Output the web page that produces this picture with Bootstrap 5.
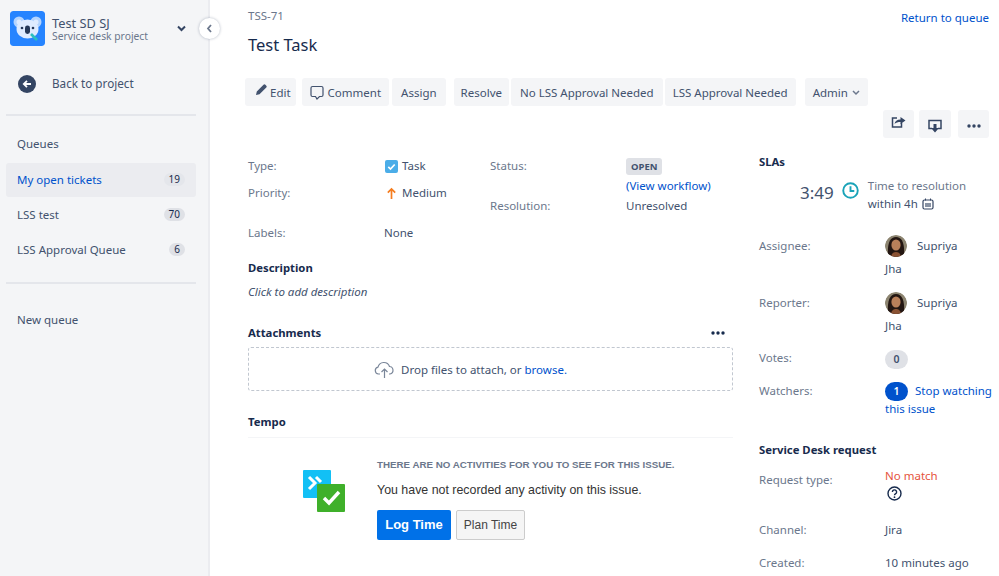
<!DOCTYPE html>
<html lang="en"><head><meta charset="utf-8"><title>TSS-71</title>
<link href="https://cdn.jsdelivr.net/npm/bootstrap@5.3.0/dist/css/bootstrap.min.css" rel="stylesheet">
<style>
html,body{height:576px;overflow:hidden}
body{font-family:"Noto Sans","Open Sans",sans-serif;font-size:11.5px;line-height:16px;color:#172b4d;background:#fff}
.shell{height:576px;overflow:hidden}
.side{width:210px;flex:none;background:#f4f5f7;border-right:2px solid #ebecf0;position:relative;color:#42526e;height:576px}
.proj{padding:11px 0 0 10px;height:72px}
.plogo{width:35px;height:35px;flex:none;border-radius:3px}
.pname{font-size:12.800px;line-height:14px;color:#42526e;margin-left:7px;padding-top:5px}
.psub{font-size:10.300px;line-height:12px;color:#6b778c}
.pchev{margin-left:auto;margin-right:22px}
.collapse-btn{position:absolute;left:199px;top:18px;width:21px;height:21px;border-radius:50%;background:#fff;box-shadow:0 0 3px rgba(9,30,66,.3);display:flex;align-items:center;justify-content:center}
.backrow{padding-left:18px;height:24px;gap:16px;font-size:11.700px}
.backrow span{margin-top:-2px}
.sep{height:2px;background:#e4e6eb;margin:0 12px 0 6px}
.qhead{padding-left:17px;height:16px;margin:20px 0 11px;color:#42526e}
.qitem{margin:0 12px 1px 6px;height:34px;padding:0 11px;border-radius:3px;display:flex;align-items:center;justify-content:space-between;color:#42526e;text-decoration:none}
.qitem.on{background:#ebecf0;color:#0052cc}
.qn{background:#dfe1e6;color:#172b4d;border-radius:8px;font-size:10px;line-height:13px;padding:0 5px;margin-top:-2px}
.on .qn{background:#e4e6eb}
.newq{padding-left:17px;margin-top:28px}
.mainp{flex:1;min-width:0;padding-left:38px;position:relative}
.crumb{font-size:11.500px;color:#6b778c;padding-top:8px;line-height:16px}
.back{position:absolute;right:10px;top:10px;color:#0052cc;text-decoration:none}
h1.ttl{font-size:16.500px;line-height:22px;font-weight:400;margin:10px 0 0;color:#172b4d}
.tb{margin:22px 0 0 -3px;gap:2px;height:28px}
.tbtn{background:#f4f5f7;border:0;border-radius:3px;color:#42526e;font-size:11.500px;line-height:16px;height:28px;padding:1px 9px 0;display:flex;align-items:center;gap:4px;white-space:nowrap}
.tb .bedit{padding-left:10px;padding-right:5px;gap:2px}
.tb .bcomm{padding-left:8px;padding-right:8px;margin-left:4px}
.tb .bres{padding-left:7px;padding-right:7px;margin-left:6px}
.tb .bno{padding-left:9px;padding-right:9px}
.tb .blss{padding-left:8px;padding-right:8px}
.tb .badm{padding-left:8px;padding-right:8px;margin-left:7px}
.tb .g1{margin-left:1px}
.tb2{justify-content:flex-end;margin:4px 10px 0 0;height:28px}
.tb2 .tbtn{width:31px;padding:0;justify-content:center}
.tb2 .m5{margin-left:5px;width:32px}
.tb2 .m7{margin-left:7px}
.cols{gap:26px;margin-top:20px}
.lc{width:485px;flex:none}
.rc{width:240px;flex:none;margin-top:-4px}
.lbl{color:#6b778c}
.val{color:#42526e}
.dtl{height:91px;position:relative}
.dcol{width:242px;flex:none}
.dr{display:flex;height:27px}
.dr .lbl{width:136px;flex:none}
.stw{width:136px;flex:none}
.lozg{background:#dfe1e6;color:#42526e;font-weight:700;font-size:9.500px;line-height:17px;border-radius:3px;padding:0 5px;display:block;width:fit-content}
.secth{font-weight:700;font-size:11.300px;color:#172b4d;line-height:16px}
.lnk{color:#0052cc;text-decoration:none}
.desc{font-style:italic;color:#42526e;margin-top:8px}
.drop{border:1px dashed #c1c7d0;border-radius:3px;height:44px;margin-top:6px;padding:1px 40px 0 0;display:flex;align-items:center;justify-content:center;gap:6px;color:#42526e}
.tempo{height:132px;margin-top:7px;border-top:1px solid #f4f5f7;display:flex;padding:20px 0 0 55px;font-family:"Liberation Sans",sans-serif}
.tico{width:42px;height:42px;flex:none;margin-right:32px;margin-top:12px}
.tcap{font-size:9.750px;font-weight:700;color:#6b778c;line-height:14px}
.tmsg{font-size:12.400px;color:#333;margin-top:10px;line-height:16px}
.tact{gap:5px;margin-top:12px}
.logb{background:#0071e8;border:0;color:#fff;font-weight:700;font-size:13px;height:30px;width:74px;border-radius:2px;padding:0}
.planb{background:#f5f5f5;border:1px solid #ccc;color:#444;font-size:12px;height:30px;width:69px;border-radius:2px;padding:0}
.rrow{display:flex}
.rrow .lbl{width:126px;flex:none}
.ava{width:22px;height:22px;border-radius:50%;flex:none;margin-right:10px}
.ppl{height:46px}
.pline{height:16px}
.pjha{margin-top:7px}
.sla{height:37px;gap:8px;margin-top:7px;padding-left:41px}
.slat{font-size:17px;line-height:24px;color:#42526e;margin-top:4px}
.slai{margin-top:5px;margin-right:1px}
.slax{line-height:18px}
.pill{display:inline-block;background:#dfe1e6;border-radius:10px;min-width:23px;text-align:center;line-height:19px;font-size:10.500px;font-weight:600;color:#42526e}
.pill.blue{background:#0052cc;color:#fff;margin-bottom:-1px}
.red{color:#e5533d}
.nw{white-space:nowrap;line-height:18px}
.watchl{padding-top:1px}
</style></head>
<body>
<div class="shell d-flex">
<aside class="side">
 <div class="proj d-flex align-items-start">
  <svg class="plogo" viewBox="0 0 35 35"><rect width="35" height="35" rx="3" fill="#2684ff"/><circle cx="9" cy="11" r="5.500" fill="#b3d4ff"/><circle cx="26" cy="11" r="5.500" fill="#b3d4ff"/><circle cx="9" cy="11" r="2.500" fill="#deebff"/><circle cx="26" cy="11" r="2.500" fill="#deebff"/><ellipse cx="17.500" cy="18" rx="11" ry="9.500" fill="#deebff"/><circle cx="12" cy="17" r="1.300" fill="#253858"/><circle cx="23" cy="17" r="1.300" fill="#253858"/><rect x="15" y="14.500" width="5" height="8.500" rx="2.400" fill="#253858"/><path d="M21 23l6 6" stroke="#2abfbf" stroke-width="2.600"/></svg>
  <div class="pname"><div>Test SD SJ</div><div class="psub">Service desk project</div></div>
  <svg class="pchev" style="margin-top:14px" width="9" height="7" viewBox="0 0 9 7"><path d="M1 1.500l3.500 3.500 3.500-3.500" fill="none" stroke="#344563" stroke-width="2"/></svg>
 </div>
 <div class="collapse-btn"><svg width="7" height="9" viewBox="0 0 7 9"><path d="M5 1L2 4.500 5 8" fill="none" stroke="#6b778c" stroke-width="1.800"/></svg></div>
 <div class="backrow d-flex align-items-center">
  <svg width="18" height="18" viewBox="0 0 18 18"><circle cx="9" cy="9" r="9" fill="#344563"/><path d="M13 9H6M9 5.800L5.800 9 9 12.200" fill="none" stroke="#fff" stroke-width="1.800"/></svg>
  <span>Back to project</span>
 </div>
 <div class="sep" style="margin-top:18px"></div>
 <div class="qhead">Queues</div>
 <a class="qitem on" href="#"><span>My open tickets</span><span class="qn">19</span></a>
 <a class="qitem" href="#"><span>LSS test</span><span class="qn">70</span></a>
 <a class="qitem" href="#"><span>LSS Approval Queue</span><span class="qn">6</span></a>
 <div class="sep" style="margin-top:15px"></div>
 <div class="newq">New queue</div>
</aside>
<main class="mainp">
 <a class="back" href="#">Return to queue</a>
 <div class="crumb">TSS-71</div>
 <h1 class="ttl">Test Task</h1>
 <div class="tb d-flex">
  <button class="tbtn bedit"><svg width="13" height="13" viewBox="0 0 13 13" style="margin-top:-6px"><path d="M1 12l.8-3.500L8.500 1.800a1.300 1.300 0 0 1 1.900 0l.9.900a1.300 1.300 0 0 1 0 1.900L4.500 11.200z" fill="#42526e"/></svg>Edit</button>
  <button class="tbtn bcomm"><svg width="14" height="15" viewBox="0 0 14 15"><path d="M2.500 1.500h9a1.500 1.500 0 0 1 1.500 1.500v7a1.500 1.500 0 0 1-1.500 1.500H9.500L7 14l-1.500-2.500h-3A1.500 1.500 0 0 1 1 10V3a1.500 1.500 0 0 1 1.500-1.500z" fill="none" stroke="#42526e" stroke-width="1.200"/></svg>Comment</button>
  <button class="tbtn g1">Assign</button>
  <button class="tbtn bres">Resolve</button>
  <button class="tbtn bno">No LSS Approval Needed</button>
  <button class="tbtn blss">LSS Approval Needed</button>
  <button class="tbtn badm">Admin <svg width="8" height="6" viewBox="0 0 8 6"><path d="M1 1l3 3 3-3" fill="none" stroke="#6b778c" stroke-width="1.500"/></svg></button>
 </div>
 <div class="tb2 d-flex">
  <button class="tbtn" aria-label="Share"><svg width="15" height="13" viewBox="0 0 15 13" style="margin-top:-5px"><path d="M6 3H1.500v9h9V8" fill="none" stroke="#344563" stroke-width="1.500"/><path d="M3.500 9c.5-3 2.500-4.500 6-4.500V2l5 3.500-5 3.500V7C7 7 5 7.500 3.500 9z" fill="#344563"/></svg></button>
  <button class="tbtn m5" aria-label="Export"><svg width="14" height="14" viewBox="0 0 14 14" style="margin-top:3px"><path d="M4 9.500H1V1.500h12v8h-3" fill="none" stroke="#344563" stroke-width="1.500"/><path d="M5.500 5h3v4h2.500L7 13.500 3 9h2.500z" fill="#344563"/></svg></button>
  <button class="tbtn m7" aria-label="More"><svg width="14" height="4" viewBox="0 0 14 4" style="margin-top:3px"><circle cx="2" cy="2" r="1.700" fill="#344563"/><circle cx="7" cy="2" r="1.700" fill="#344563"/><circle cx="12" cy="2" r="1.700" fill="#344563"/></svg></button>
 </div>
 <div class="cols d-flex">
  <div class="lc">
   <div class="dtl">
    <div class="d-flex">
     <div class="dcol">
      <div class="dr"><span class="lbl">Type:</span><span class="val d-flex gap-1"><svg width="13" height="13" viewBox="0 0 13 13" style="margin:2px 0 0 1px"><rect width="13" height="13" rx="2" fill="#4bade8"/><path d="M3.300 6.800l2.200 2.200 4.200-4.500" fill="none" stroke="#fff" stroke-width="1.700"/></svg>Task</span></div>
      <div class="dr"><span class="lbl">Priority:</span><span class="val d-flex gap-1"><svg width="13" height="13" viewBox="0 0 13 13" style="margin:2px 0 0 1px"><path d="M6.500 12V2M2.800 5.700L6.500 2l3.700 3.700" fill="none" stroke="#f57d20" stroke-width="1.700"/></svg>Medium</span></div>
     </div>
     <div class="flex-grow-1">
      <div class="d-flex"><span class="lbl stw">Status:</span><div><span class="lozg">OPEN</span><div style="margin-top:3px"><a class="lnk" href="#">(View workflow)</a></div></div></div>
      <div class="d-flex" style="margin-top:4px"><span class="lbl stw">Resolution:</span><span class="val">Unresolved</span></div>
     </div>
    </div>
    <div class="dr position-absolute" style="top:67px;left:0"><span class="lbl">Labels:</span><span class="val">None</span></div>
   </div>
   <div class="secth" style="margin-top:11px">Description</div>
   <div class="desc">Click to add description</div>
   <div class="d-flex justify-content-between align-items-center" style="margin-top:25px"><span class="secth">Attachments</span><svg width="14" height="4" viewBox="0 0 14 4" style="margin-right:8px"><circle cx="2" cy="2" r="1.700" fill="#172b4d"/><circle cx="7" cy="2" r="1.700" fill="#172b4d"/><circle cx="12" cy="2" r="1.700" fill="#172b4d"/></svg></div>
   <div class="drop"><svg width="21" height="19" viewBox="0 0 21 19"><path d="M6 14H4.500A3.500 3.500 0 0 1 4 7.100 6 6 0 0 1 15.500 6.500 3.800 3.800 0 0 1 16 14h-1" fill="none" stroke="#7a8699" stroke-width="1.200"/><path d="M10.500 18V9.500M7.500 12l3-3 3 3" fill="none" stroke="#7a8699" stroke-width="1.200"/></svg><span>Drop files to attach, or <a class="lnk" href="#">browse.</a></span></div>
   <div class="secth" style="margin-top:23px">Tempo</div>
   <div class="tempo">
    <svg class="tico" viewBox="0 0 42 42"><rect x="0" y="0" width="28" height="28" rx="1" fill="#12c0f5"/><path d="M6 7l6 6-6 6M13 7l5 5" fill="none" stroke="#fff" stroke-width="3"/><rect x="14" y="14" width="28" height="28" rx="1" fill="#3fb02a"/><path d="M21 28l5 5 10-11" fill="none" stroke="#fff" stroke-width="3.400"/></svg>
    <div>
     <div class="tcap">THERE ARE NO ACTIVITIES FOR YOU TO SEE FOR THIS ISSUE.</div>
     <div class="tmsg">You have not recorded any activity on this issue.</div>
     <div class="d-flex tact"><button class="logb">Log Time</button><button class="planb">Plan Time</button></div>
    </div>
   </div>
  </div>
  <div class="rc">
   <div class="secth">SLAs</div>
   <div class="sla d-flex">
    <span class="slat">3:49</span>
    <svg class="slai" width="17" height="17" viewBox="0 0 18 18"><circle cx="9" cy="9" r="7.700" fill="none" stroke="#1aa3b8" stroke-width="2"/><path d="M9 4.500V9.500H13" fill="none" stroke="#1aa3b8" stroke-width="2"/></svg>
    <div class="slax"><div class="lbl">Time to resolution</div><div class="val d-flex align-items-center gap-1">within 4h <svg width="12" height="12" viewBox="0 0 12 12"><rect x="1" y="2" width="10" height="9" rx="1.500" fill="none" stroke="#344563" stroke-width="1.200"/><path d="M3.500 .5v2M8.500 .5v2" stroke="#344563"/><rect x="3" y="5" width="6" height="4" fill="#8993a4"/></svg></div></div>
   </div>
   <div class="rrow" style="margin-top:24px"><span class="lbl">Assignee:</span><div class="val ppl"><div class="d-flex align-items-center pline"><svg class="ava" viewBox="0 0 22 22"><circle cx="11" cy="11" r="11" fill="#8c8470"/><path d="M3 22C2 8 5 2 11 2s9 6 8 20z" fill="#231612"/><ellipse cx="11" cy="10" rx="4.600" ry="5.600" fill="#b9805a"/><path d="M6 22c.5-4 3-5 5-5s4.500 1 5 5z" fill="#8a5233"/></svg><span>Supriya</span></div><div class="pjha">Jha</div></div></div>
   <div class="rrow" style="margin-top:11px"><span class="lbl">Reporter:</span><div class="val ppl"><div class="d-flex align-items-center pline"><svg class="ava" viewBox="0 0 22 22"><circle cx="11" cy="11" r="11" fill="#8c8470"/><path d="M3 22C2 8 5 2 11 2s9 6 8 20z" fill="#231612"/><ellipse cx="11" cy="10" rx="4.600" ry="5.600" fill="#b9805a"/><path d="M6 22c.5-4 3-5 5-5s4.500 1 5 5z" fill="#8a5233"/></svg><span>Supriya</span></div><div class="pjha">Jha</div></div></div>
   <div class="rrow" style="margin-top:9px"><span class="lbl">Votes:</span><span class="pill">0</span></div>
   <div class="rrow" style="margin-top:13px"><span class="lbl watchl">Watchers:</span><div class="nw"><span class="pill blue me-1">1</span> <a class="lnk" href="#">Stop watching<br>this issue</a></div></div>
   <div class="secth" style="margin-top:24px">Service Desk request</div>
   <div class="rrow" style="margin-top:9px"><span class="lbl" style="padding-top:5px">Request type:</span><div><div class="red" style="line-height:18px">No match</div><svg width="15" height="15" viewBox="0 0 15 15" style="margin-left:2px"><circle cx="7.500" cy="7.500" r="6.500" fill="none" stroke="#172b4d" stroke-width="1.400"/><path d="M5.400 6a2.100 2.100 0 1 1 3.300 1.700c-.8.500-1.200.9-1.200 1.500" fill="none" stroke="#172b4d" stroke-width="1.400"/><circle cx="7.500" cy="11.200" r=".9" fill="#172b4d"/></svg></div></div>
   <div class="rrow" style="margin-top:21px"><span class="lbl">Channel:</span><span class="val">Jira</span></div>
   <div class="rrow" style="margin-top:17px"><span class="lbl">Created:</span><span class="val">10 minutes ago</span></div>
  </div>
 </div>
</main>
</div>
<script src="https://cdn.jsdelivr.net/npm/bootstrap@5.3.0/dist/js/bootstrap.bundle.min.js"></script>
</body></html>
